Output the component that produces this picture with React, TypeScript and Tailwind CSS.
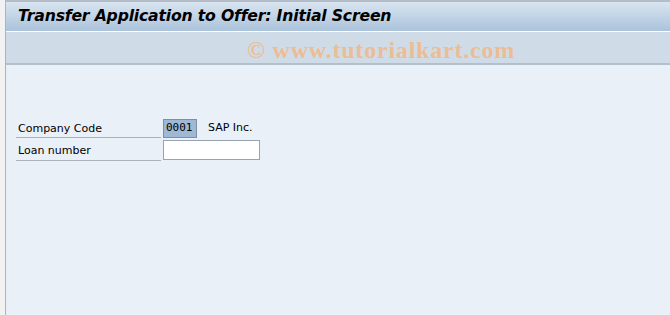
import React from "react";

const App: React.FC = () => {
    return (
        <div className="w-[670px] h-[315px] bg-[#f2f2f2] pl-[5px] overflow-hidden" style={{ fontFamily: "'DejaVu Sans', Tahoma, sans-serif" }}>
            <div className="flex flex-col h-full border-l border-[#a9b4c2] border-t-2 border-t-[#b4bcc8]">
                {/* title bar */}
                <div className="h-[30px] bg-gradient-to-b from-[#d9e5f0] to-[#abc3db] flex items-center pl-[12px] pb-[1px] border-b border-white">
                    <h1 className="text-[15.7px] font-bold italic text-black tracking-[-0.2px]">
                        Transfer Application to Offer: Initial Screen
                    </h1>
                </div>
                {/* toolbar area */}
                <div className="h-[33px] bg-[#cfdce7] border-b-2 border-[#b3bfcb] flex items-center pl-[241px] pt-[5px]">
                    <span className="text-[24px] font-bold text-[#ecbd94] tracking-[0.8px]" style={{ fontFamily: "'Liberation Serif', 'Times New Roman', serif" }}>
                        © www.tutorialkart.com
                    </span>
                </div>
                {/* body */}
                <div className="flex-1 bg-[#e9f0f7] pt-[53px] pl-[10px] text-[11px] text-black">
                    <div className="flex items-center h-[20px]">
                        <div className="w-[145px] h-full flex items-center pl-[2px] pt-[3px] border-b border-[#a8b3bd]">Company Code</div>
                        <div className="ml-[2px] w-[34px] h-[19px] bg-[#9fb8d3] border border-[#7d8fa3] flex items-center pl-[2px]" style={{ fontFamily: "'DejaVu Sans Mono', monospace" }}>
                            0001
                        </div>
                        <div className="ml-[11px] pt-[1px]">SAP Inc.</div>
                    </div>
                    <div className="flex items-center h-[22px] mt-[1px]">
                        <div className="w-[145px] h-full flex items-center pl-[2px] pt-[3px] border-b border-[#a8b3bd]">Loan number</div>
                        <div className="ml-[2px] w-[97px] h-[20px] bg-white border border-[#97a3b0]"></div>
                    </div>
                </div>
            </div>
        </div>
    );
};

export default App;
